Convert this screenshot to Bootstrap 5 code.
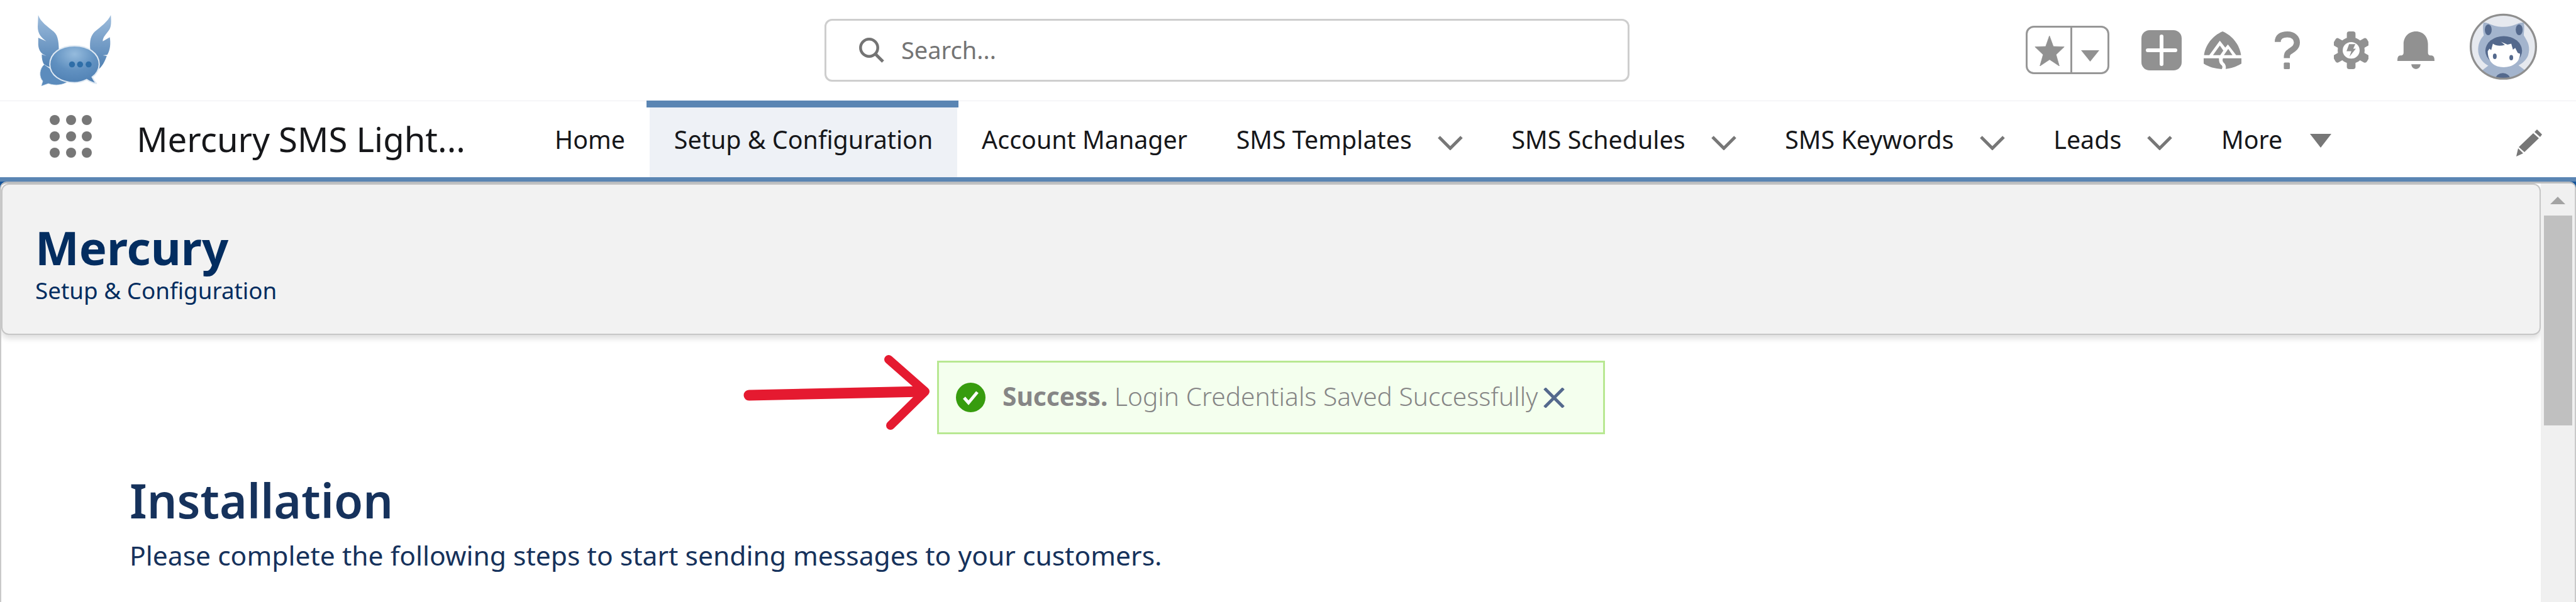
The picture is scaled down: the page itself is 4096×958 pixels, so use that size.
<!DOCTYPE html>
<html lang="en"><head><meta charset="utf-8"><title>Mercury</title>
<link href="https://cdn.jsdelivr.net/npm/bootstrap@5.3.0/dist/css/bootstrap.min.css" rel="stylesheet">
<style>
html,body{height:958px;overflow:hidden;background:#fff;font-family:"Noto Sans","Open Sans",sans-serif}
body{position:relative}
.app-top{height:161px;padding:0 62px 0 60px;border-bottom:1px solid #eeeff3}
.app-logo{width:117px;height:113px;flex:none}
.search-box{width:1280px;height:100px;margin-left:1134px;margin-top:-1px;border:3px solid #cecece;border-radius:12px;padding-left:52px;gap:27px;color:#747474;font-size:38px}
.fav-box{width:133px;height:77px;border:3px solid #979797;border-radius:13px;margin-right:51px;margin-top:-1px}
.fav-star{width:71px;padding-left:11px;padding-top:3px;border-right:3px solid #979797}
.fav-caret{padding-left:14px;padding-top:18px}
.ic-plus{margin-right:35px}.ic-trail{margin-right:53px}.ic-q{margin-right:54px}.ic-gear{margin-right:46px}.ic-bell{margin-right:56px}
.ic-avatar{margin-bottom:12px}
.app-nav{height:121px;padding-left:79px;padding-right:54px}
.grid-dots{display:grid;grid-template-columns:repeat(3,16px);gap:9.6px;margin-right:71px;margin-bottom:9px;flex:none}
.grid-dots i{width:16px;height:16px;border-radius:50%;background:#777}
.app-name{font-size:54.5px;color:#16171a;width:626px;white-space:nowrap;line-height:1;flex:none}
.tab-item{height:121px;padding:2px 38.8px 0;font-size:39.4px;color:#16171a;gap:41px;position:relative;white-space:nowrap}
.tab-item.on{background:#eef1f6;padding-left:39px;padding-right:39px}
.tab-item.on::before{content:"";position:absolute;left:-5px;right:-2px;top:-1px;height:11px;background:#5a85b3}
.chev{margin-top:10px}
.more-caret{margin-top:2px;margin-left:3px}
.pen{margin-top:12px}
.blue-rule{height:7px;background:#5a85b3}
.frame-back{background:#15559a}
.page-frame{height:669px;background:#fff;border-left:2px solid #c9c9c9;border-right:2px solid #c9c9c9;border-top:3px solid #b9bcbf;border-radius:10px 10px 0 0;overflow:hidden}
.page-main{flex:1;min-width:0}
.page-head{height:241px;background:#f2f2f2;border:2px solid #c6c6c6;border-radius:12px;box-shadow:0 6px 10px rgba(0,0,0,.13);padding:63px 0 0 52px}
.page-head h1{font-size:74px;line-height:1;font-weight:700;color:#032d60;margin:0}
.page-head p{font-size:36.8px;line-height:1;color:#032d60;margin:13px 0 0}
.scroll-rail{width:54px;background:#f0f0f0;flex:none}
.scroll-up{height:0;width:0;margin:21px auto 18px;border-left:12px solid transparent;border-right:12px solid transparent;border-bottom:12px solid #a3a3a3}
.scroll-thumb{height:334px;margin:0 4px 0 5px;background:#c0c0c0}
.note-row{margin-top:41px;padding-left:1488px}
.note-box{width:1062px;height:117px;background:#f4ffee;border:3px solid #b8e892;padding-left:27px;font-size:40.7px;color:#868686;white-space:nowrap}
.note-txt{margin-left:27px;margin-right:9px;padding-bottom:4px;font-weight:300}
.note-txt b{font-weight:700}
.pointer{position:absolute;left:1170px;top:550px}
.install{padding:68px 0 0 204px}
.install h2{font-size:75px;line-height:1;font-weight:600;color:#16325c;margin:0}
.install p{font-size:42.6px;line-height:1;color:#16325c;margin:28px 0 0}
</style></head><body>
<header class="app-top d-flex align-items-center">
<svg class="app-logo" viewBox="75 29 146 141"><defs><linearGradient id="w" x1="0" y1="0" x2="0" y2="1"><stop offset="0" stop-color="#9dbcdc"/><stop offset="1" stop-color="#4f80b3"/></linearGradient><radialGradient id="b" cx=".5" cy=".22" r=".8"><stop offset="0" stop-color="#95bbdd"/><stop offset=".55" stop-color="#6090c0"/><stop offset="1" stop-color="#4f80b3"/></radialGradient></defs>
<path fill="url(#w)" d="M76 29C80 42 95 52 107 62C116 70 117 85 117 105L105 135L88 128C84 122 83 115 83 107L92 110C82 106 77 100 76 88L76 74L92 81C82 74 75 66 75 52Z"/>
<path fill="url(#w)" d="M220 29C221 42 221 52 217 58C212 66 204 72 204 81L218 73C220 85 219 98 213 108L204 109L212 110C208 122 202 132 195 137L179 95C178 80 180 70 188 62C200 52 214 42 220 29Z"/>
<path fill="#5c8cbd" stroke="#d5e3ef" d="M88 127C78 135 77 152 85 160L82 170L96 165C110 170 125 168 135 161Z"/>
<path fill="url(#b)" stroke="#dfe9f3" stroke-width="2.5" d="M148 90C175 90 197 105 197 127C197 137 191 147 183 152C186 158 188 162 192 165C185 164 178 161 172 157C164 161 156 163 148 163C120 163 99 148 99 127C99 105 120 90 148 90Z"/>
<circle cx="143" cy="127" r="6" fill="#2f6ea8"/><circle cx="159" cy="127" r="6" fill="#2f6ea8"/><circle cx="176" cy="127" r="6" fill="#2f6ea8"/></svg>
<div class="search-box d-flex align-items-center bg-white"><svg width="40" height="40" viewBox="0 0 40 40"><circle cx="16" cy="16" r="13.7" fill="none" stroke="#747474" stroke-width="4.5"/><path d="M25 25L38 38" stroke="#747474" stroke-width="5"/></svg><span>Search...</span></div>
<div class="ms-auto d-flex align-items-center">
<div class="fav-box d-flex">
<div class="fav-star d-flex align-items-center"><svg width="48" height="48" viewBox="128 157 172 178"><path fill="#919191" stroke="#919191" stroke-width="3" stroke-linejoin="round" d="M213 157L236 220L300 222L252 268L271 335L214 297L157 335L176 268L128 222L191 220Z"/></svg></div>
<div class="fav-caret d-flex align-items-center"><svg width="29" height="18" viewBox="0 0 29 18"><path fill="#919191" d="M0 0H29L14.5 18Z"/></svg></div>
</div>
<svg class="ic-plus" width="64" height="64" viewBox="0 0 64 64"><rect width="64" height="64" rx="13" fill="#919191"/><path d="M32 10V54M10 32H54" stroke="#fff" stroke-width="6" stroke-linecap="round"/></svg>
<svg class="ic-trail" width="60" height="60" viewBox="1105 130 215 222" preserveAspectRatio="none"><g fill="#919191"><path d="M1213 130C1270 155 1310 210 1318 270L1290 270L1243 207L1228 225L1197 185L1137 270L1107 270C1115 210 1155 155 1213 130Z"/><path d="M1197 213L1217 243L1199 270L1158 270Z"/><path d="M1245 233L1269 270L1220 270Z"/><path d="M1105 288L1192 288C1192 310 1195 318 1208 330C1214 337 1212 345 1208 352C1170 350 1135 340 1105 320Z"/><path d="M1215 288L1320 288L1320 320C1290 338 1260 348 1230 351C1233 340 1232 325 1218 313C1211 305 1212 297 1215 288Z"/></g></svg>
<svg class="ic-q" width="40" height="60" viewBox="0 0 50 75"><path d="M6 21C6 10 14 6 25 6C37 6 44 13 44 22C44 32 36 36 30 40C25 43 24 46 24 53" fill="none" stroke="#919191" stroke-width="12"/><rect x="18" y="62" width="12" height="13" rx="2" fill="#919191"/></svg>
<svg class="ic-gear" width="55" height="60" viewBox="288 130 200 223" preserveAspectRatio="none"><g fill="#919191"><circle cx="388" cy="242" r="78"/><rect x="363" y="130" width="50" height="223" rx="14"/><rect x="363" y="130" width="50" height="223" rx="14" transform="rotate(60 388 242)"/><rect x="363" y="130" width="50" height="223" rx="14" transform="rotate(120 388 242)"/></g><circle cx="388" cy="242" r="49" fill="#fff"/><path fill="#919191" d="M376 205H412L400 232H415L378 280L389 247H361Z"/></svg>
<svg class="ic-bell" width="59" height="60" viewBox="652 130 216 224" preserveAspectRatio="none"><g fill="#919191"><path d="M760 130C715 130 688 165 688 205L688 255C688 270 680 273 668 273C656 274 652 285 652 305L868 305C868 285 864 274 850 273C838 273 830 270 830 255L830 205C830 165 805 130 760 130Z"/><path d="M733 325L787 325C785 345 772 353 760 353C748 353 735 345 733 325Z"/></g></svg>
<svg class="ic-avatar" width="107" height="109" viewBox="1070 15 392 407" preserveAspectRatio="none"><defs><clipPath id="av"><circle cx="1266" cy="218" r="190"/></clipPath></defs><circle cx="1266" cy="218" r="193" fill="#e6e9ef"/><g clip-path="url(#av)"><path fill="#a3b4cd" d="M1140 360L1185 325H1350L1395 360L1370 425H1160Z"/><path fill="#a3b4cd" d="M1150 75C1180 70 1200 100 1266 100C1330 100 1350 70 1385 75C1390 110 1385 130 1385 150C1410 190 1425 220 1410 270C1390 320 1330 350 1266 350C1200 350 1130 320 1120 250C1115 200 1135 170 1152 150C1147 125 1145 100 1150 75Z"/><ellipse cx="1178" cy="117" rx="20" ry="32" fill="#54698d"/><ellipse cx="1358" cy="117" rx="20" ry="32" fill="#54698d"/><ellipse cx="1263" cy="410" rx="42" ry="36" fill="#54698d"/></g><ellipse cx="1268" cy="242" rx="107" ry="87" fill="#54698d"/><path fill="#fff" d="M1175 245L1185 230L1195 238L1205 200C1225 215 1250 215 1275 207C1265 200 1258 192 1250 188L1290 205L1312 200L1322 235L1335 225L1350 255L1363 260C1363 310 1320 340 1268 340C1215 340 1175 310 1175 245Z"/><ellipse cx="1216" cy="275" rx="11" ry="16" fill="#54698d"/><ellipse cx="1312" cy="283" rx="11" ry="16" fill="#54698d"/><circle cx="1266" cy="218" r="190" fill="none" stroke="#8f8f8f" stroke-width="12"/></svg>
</div>
</header>
<nav class="app-nav d-flex align-items-center">
<div class="grid-dots"><i></i><i></i><i></i><i></i><i></i><i></i><i></i><i></i><i></i></div>
<div class="app-name">Mercury SMS Light...</div>
<div class="tab-item d-flex align-items-center">Home</div>
<div class="tab-item on d-flex align-items-center">Setup &amp; Configuration</div>
<div class="tab-item d-flex align-items-center">Account Manager</div>
<div class="tab-item d-flex align-items-center">SMS Templates<svg class="chev" width="40" height="23" viewBox="0 0 40 23"><path d="M2 2L20 20L38 2" fill="none" stroke="#777" stroke-width="5"/></svg></div>
<div class="tab-item d-flex align-items-center">SMS Schedules<svg class="chev" width="40" height="23" viewBox="0 0 40 23"><path d="M2 2L20 20L38 2" fill="none" stroke="#777" stroke-width="5"/></svg></div>
<div class="tab-item d-flex align-items-center">SMS Keywords<svg class="chev" width="40" height="23" viewBox="0 0 40 23"><path d="M2 2L20 20L38 2" fill="none" stroke="#777" stroke-width="5"/></svg></div>
<div class="tab-item d-flex align-items-center">Leads<svg class="chev" width="40" height="23" viewBox="0 0 40 23"><path d="M2 2L20 20L38 2" fill="none" stroke="#777" stroke-width="5"/></svg></div>
<div class="tab-item d-flex align-items-center">More<svg class="more-caret" width="34" height="22" viewBox="0 0 34 22"><path d="M0 0H34L17 22Z" fill="#777"/></svg></div>
<svg class="pen ms-auto" width="41" height="43" viewBox="0 0 41 43"><path fill="#777" d="M33 0L41 8L38 12L29 4ZM27 6L36 14L13 36L4 28ZM3 30L11 38L0 43Z"/></svg>
</nav>
<div class="blue-rule"></div>
<div class="frame-back">
<main class="page-frame d-flex">
<div class="page-main">
<section class="page-head"><h1>Mercury</h1><p>Setup &amp; Configuration</p></section>
<div class="note-row"><div class="note-box d-flex align-items-center"><svg width="47" height="47" viewBox="0 0 47 47"><circle cx="23.5" cy="23.5" r="23.5" fill="#379c0e"/><path d="M13 24L20 32L34 15" fill="none" stroke="#fff" stroke-width="5"/></svg><span class="note-txt"><b>Success.</b> Login Credentials Saved Successfully</span><svg width="34" height="32" viewBox="0 0 34 32"><path d="M2 1L32 31M32 1L2 31" stroke="#54698d" stroke-width="5"/></svg></div></div>
<section class="install"><h2>Installation</h2><p>Please complete the following steps to start sending messages to your customers.</p></section>
</div>
<aside class="scroll-rail"><div class="scroll-up"></div><div class="scroll-thumb"></div></aside>
</main>
</div>
<svg class="pointer" width="320" height="150" viewBox="0 0 320 150"><path d="M21 79L298 73" fill="none" stroke="#e51a30" stroke-width="17" stroke-linecap="round"/><path d="M243 22L301 73L246 127" fill="none" stroke="#e51a30" stroke-width="14" stroke-linecap="round" stroke-linejoin="round"/></svg>
<script src="https://cdn.jsdelivr.net/npm/bootstrap@5.3.0/dist/js/bootstrap.bundle.min.js"></script>
</body></html>
